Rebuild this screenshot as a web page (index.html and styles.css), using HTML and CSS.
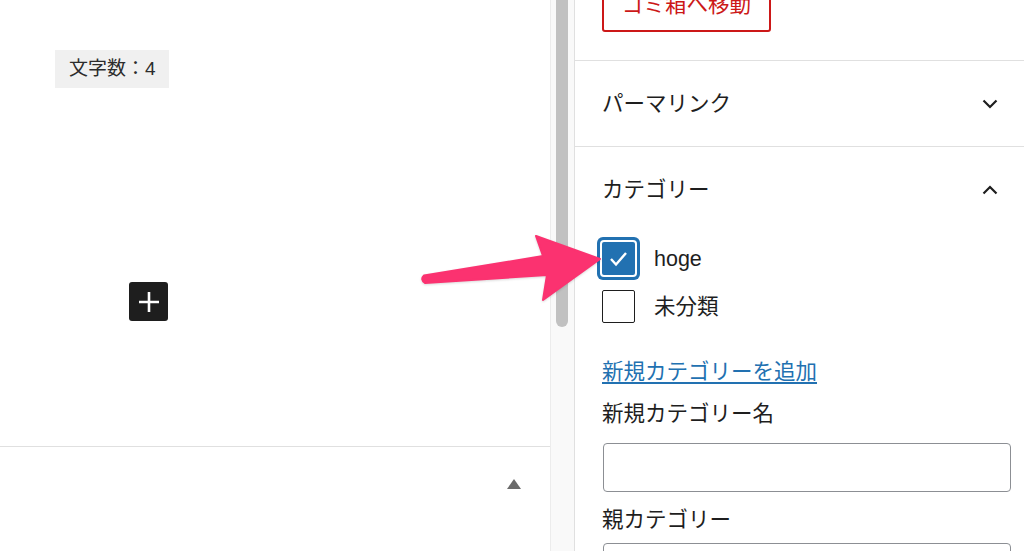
FILE: index.html
```html
<!DOCTYPE html>
<html lang="ja">
<head>
    <meta charset="UTF-8">
    <meta name="viewport" content="width=device-width, initial-scale=1.0">
    <title>投稿の編集</title>
    <link rel="stylesheet" href="styles.css">
</head>
<body>
    <div class="layout">
        <div class="editor">
            <div class="canvas">
                <div class="word-count">文字数：4</div>
                <button class="inserter" aria-label="ブロックを追加">
                    <svg width="22" height="22" viewBox="0 0 22 22">
                        <path d="M11 1v20M1 11h20" stroke="#fff" stroke-width="2.6" fill="none"/>
                    </svg>
                </button>
            </div>
            <div class="editor-footer">
                <span class="toggle-up"></span>
            </div>
        </div>

        <div class="scroll-track">
            <div class="scroll-thumb"></div>
        </div>

        <aside class="sidebar">
            <div class="sidebar-top">
                <button class="trash-btn">ゴミ箱へ移動</button>
            </div>

            <div class="panel">
                <div class="panel-header">
                    <span class="panel-title">パーマリンク</span>
                    <svg class="chevron" width="16" height="10" viewBox="0 0 16 10">
                        <polyline points="1.5,1.5 8,8 14.5,1.5" fill="none" stroke="#1e1e1e" stroke-width="2.2"/>
                    </svg>
                </div>
            </div>

            <div class="panel">
                <div class="panel-header">
                    <span class="panel-title">カテゴリー</span>
                    <svg class="chevron" width="16" height="10" viewBox="0 0 16 10">
                        <polyline points="1.5,8.5 8,2 14.5,8.5" fill="none" stroke="#1e1e1e" stroke-width="2.2"/>
                    </svg>
                </div>
                <div class="panel-body">
                    <div class="term-list">
                        <label class="term">
                            <span class="checkbox checked">
                                <svg width="33" height="33" viewBox="0 0 33 33">
                                    <polyline points="9,17 14,22.5 24,11" fill="none" stroke="#fff" stroke-width="2.4"/>
                                </svg>
                            </span>
                            <span class="term-name">hoge</span>
                        </label>
                        <label class="term">
                            <span class="checkbox"></span>
                            <span class="term-name">未分類</span>
                        </label>
                    </div>

                    <a class="add-link" href="#">新規カテゴリーを追加</a>

                    <div class="field-label">新規カテゴリー名</div>
                    <input class="field-input" type="text">

                    <div class="field-label">親カテゴリー</div>
                    <div class="field-input"></div>
                </div>
            </div>
        </aside>

        <svg class="pointer-arrow" width="200" height="90" viewBox="0 0 200 90">
            <path d="M9,50.5 L128,31 L121,11 L185,34 L128,75 L132,50 L10,58 Q5,54.5 9,50.5 Z"
                  fill="#fb3270" stroke="#fb3270" stroke-width="2" stroke-linejoin="round"/>
        </svg>
    </div>
</body>
</html>
```

FILE: styles.css
```css
* {
    margin: 0;
    padding: 0;
    box-sizing: border-box;
}

body {
    font-family: "Liberation Sans", "Noto Sans CJK JP", sans-serif;
    color: #1e1e1e;
    background-color: #fff;
    overflow: hidden;
}

.layout {
    position: relative;
    display: flex;
    width: 1024px;
    height: 551px;
    overflow: hidden;
}

/* editor side */

.editor {
    width: 550px;
    display: flex;
    flex-direction: column;
}

.canvas {
    height: 447px;
    padding: 50px 0 0 55px;
    border-bottom: 1px solid #e0e0e0;
}

.word-count {
    display: inline-block;
    background-color: #f0f0f0;
    font-size: 19px;
    line-height: 38px;
    height: 38px;
    padding: 0 13px 0 14px;
    color: #2c2c2c;
}

.inserter {
    display: flex;
    align-items: center;
    justify-content: center;
    width: 39px;
    height: 39px;
    margin: 194px 0 0 74px;
    background-color: #1e1e1e;
    border: none;
    border-radius: 3px;
}

.editor-footer {
    flex: 1;
    display: flex;
    justify-content: flex-end;
    padding: 32px 29px 0 0;
}

.toggle-up {
    width: 0;
    height: 0;
    border-left: 7px solid transparent;
    border-right: 7px solid transparent;
    border-bottom: 10px solid #6b6b6b;
}

/* scrollbar between editor and sidebar */

.scroll-track {
    width: 25px;
    background-color: #f9f9f9;
    border-left: 1px solid #ececec;
    border-right: 1px solid #e0e0e0;
    padding-left: 5px;
}

.scroll-thumb {
    width: 12px;
    height: 327px;
    background-color: #c1c1c1;
    border-radius: 0 0 6px 6px;
}

/* sidebar */

.sidebar {
    flex: 1;
    font-family: "Liberation Sans", "Noto Sans CJK JP", sans-serif;
    font-size: 21.5px;
}

.sidebar-top {
    padding: 0 27px 28px;
    border-bottom: 1px solid #e0e0e0;
}

.trash-btn {
    display: block;
    height: 56px;
    margin-top: -24px;
    padding: 0 18px 3px;
    font-family: inherit;
    font-size: 21.5px;
    color: #cc1818;
    background-color: #fff;
    border: 2px solid #cc1818;
    border-radius: 3px;
}

.panel {
    border-bottom: 1px solid #e0e0e0;
}

.panel-header {
    display: flex;
    align-items: center;
    justify-content: space-between;
    height: 85px;
    padding: 0 26px 0 27px;
}

.panel-title {
    padding-bottom: 4px;
}

.chevron {
    display: block;
}

.panel-body {
    padding: 10px 0 0 27px;
}

.term-list {
    display: flex;
    flex-direction: column;
    gap: 15px;
}

.term {
    display: flex;
    align-items: center;
    gap: 19px;
    height: 33px;
}

.checkbox {
    width: 33px;
    height: 33px;
    border: 1.5px solid #1e1e1e;
    border-radius: 2px;
    background-color: #fff;
}

.checkbox.checked {
    border: none;
    background-color: #2271b1;
    box-shadow: 0 0 0 2px #fff, 0 0 0 5px #2271b1;
}

.checkbox svg {
    display: block;
}

.term-name {
    line-height: 33px;
    padding-top: 2px;
}

.add-link {
    display: block;
    margin-top: 34px;
    line-height: 30px;
    color: #2271b1;
    text-decoration: underline;
    text-underline-offset: 3px;
}

.field-label {
    margin-top: 12px;
    line-height: 30px;
}

.field-input {
    display: block;
    width: 408px;
    height: 49px;
    margin: 14px 0 0 1px;
    border: 1.5px solid #8c8f94;
    border-radius: 4px;
    background-color: #fff;
}

.field-input + .field-label {
    margin-top: 13px;
}

.field-label + .field-input:last-child {
    margin-top: 8px;
}

/* annotation arrow drawn over the screenshot */

.pointer-arrow {
    position: absolute;
    left: 415px;
    top: 225px;
    filter: drop-shadow(0 1px 1px rgba(0, 0, 0, 0.15));
}
```
